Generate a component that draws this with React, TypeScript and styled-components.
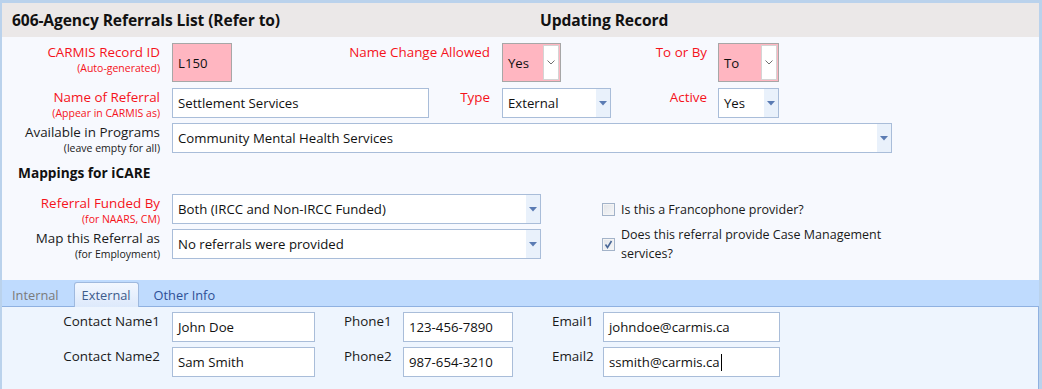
import styled, { createGlobalStyle } from "styled-components";

const GlobalStyle = createGlobalStyle`
	html, body {
		margin: 0;
		padding: 0;
		background: #ffffff;
	}
	body {
		font-family: "Open Sans", "Noto Sans", "Liberation Sans", sans-serif;
		font-size: 12px;
		color: #1a1a1a;
	}
`;

const RED = "#f5131b";

const DropArrow = () => (
	<svg width="8" height="5" viewBox="0 0 8 5">
		<polygon points="0,0 8,0 4,4.5" fill="#5a7bb3" />
	</svg>
);

const Chevron = () => (
	<svg width="8" height="5" viewBox="0 0 8 5">
		<polyline points="0.5,0.5 4,4 7.5,0.5" fill="none" stroke="#707070" strokeWidth="1" />
	</svg>
);

const CheckMark = () => (
	<svg width="9" height="9" viewBox="0 0 9 9">
		<polyline points="1.5,4.5 3.5,7.5 7.5,1" fill="none" stroke="#4a6796" strokeWidth="1.6" />
	</svg>
);

type LabelProps = { main: string; sub?: string; red?: boolean; width: number; gap?: number };

const FieldLabel = ({ main, sub, red, width, gap = 12 }: LabelProps) => (
	<LabelBlock $width={width} $gap={gap}>
		<LabelMain $red={red}>{main}</LabelMain>
		{sub && <LabelSub $red={red}>{sub}</LabelSub>}
	</LabelBlock>
);

type BoxProps = { width: number; height?: number; value: string; caret?: boolean };

const TextBox = ({ width, height = 30, value, caret }: BoxProps) => (
	<InputBox $width={width} $height={height}>
		{value}
		{caret && <Caret />}
	</InputBox>
);

const Dropdown = ({ width, height = 30, value }: BoxProps) => (
	<SelectBox $width={width} $height={height}>
		<SelectValue>{value}</SelectValue>
		<ArrowArea>
			<DropArrow />
		</ArrowArea>
	</SelectBox>
);

const PinkSelect = ({ width, value }: { width: number; value: string }) => (
	<PinkBox $width={width}>
		<SelectValue>{value}</SelectValue>
		<PinkButton>
			<Chevron />
		</PinkButton>
	</PinkBox>
);

const App = () => {
	return (
		<>
			<GlobalStyle />
			<Frame>
				<Header>
					<Title>606-Agency Referrals List (Refer to)</Title>
					<Title>Updating Record</Title>
				</Header>

				<Form>
					<Row $height={39}>
						<FieldLabel main="CARMIS Record ID" sub="(Auto-generated)" red width={158} />
						<PinkInput $width={60}>L150</PinkInput>
						<FieldLabel main="Name Change Allowed" red width={258} />
						<PinkSelect width={59} value="Yes" />
						<FieldLabel main="To or By" red width={146} gap={11} />
						<PinkSelect width={61} value="To" />
					</Row>
					<Row $height={30} $gap={5}>
						<FieldLabel main="Name of Referral" sub="(Appear in CARMIS as)" red width={158} />
						<TextBox width={257} value="Settlement Services" />
						<FieldLabel main="Type" red width={61} />
						<Dropdown width={109} value="External" />
						<FieldLabel main="Active" red width={96} gap={11} />
						<Dropdown width={61} value="Yes" />
					</Row>
					<Row $height={30} $gap={5}>
						<FieldLabel main="Available in Programs" sub="(leave empty for all)" width={158} />
						<Dropdown width={720} value="Community Mental Health Services" />
					</Row>

					<SectionTitle>Mappings for iCARE</SectionTitle>

					<Row $height={30} $gap={5}>
						<FieldLabel main="Referral Funded By" sub="(for NAARS, CM)" red width={158} />
						<Dropdown width={369} value="Both (IRCC and Non-IRCC Funded)" />
						<CheckItem>
							<CheckBox />
							<CheckText>Is this a Francophone provider?</CheckText>
						</CheckItem>
					</Row>
					<Row $height={30} $gap={5}>
						<FieldLabel main="Map this Referral as" sub="(for Employment)" width={158} />
						<Dropdown width={369} value="No referrals were provided" />
						<CheckItem>
							<CheckBox>
								<CheckMark />
							</CheckBox>
							<CheckText>Does this referral provide Case Management services?</CheckText>
						</CheckItem>
					</Row>
				</Form>

				<TabStrip>
					<Tab>Internal</Tab>
					<Tab $active>External</Tab>
					<Tab $link>Other Info</Tab>
				</TabStrip>

				<TabPanel>
					<ContactRow>
						<FieldLabel main="Contact Name1" width={158} />
						<TextBox width={143} value="John Doe" />
						<PlainLabel $width={59} $offset={29}>Phone1</PlainLabel>
						<TextBox width={110} value="123-456-7890" />
						<PlainLabel $width={51} $offset={39}>Email1</PlainLabel>
						<TextBox width={177} value="johndoe@carmis.ca" />
					</ContactRow>
					<ContactRow>
						<FieldLabel main="Contact Name2" width={158} />
						<TextBox width={143} value="Sam Smith" />
						<PlainLabel $width={59} $offset={29}>Phone2</PlainLabel>
						<TextBox width={110} value="987-654-3210" />
						<PlainLabel $width={51} $offset={39}>Email2</PlainLabel>
						<TextBox width={177} value="ssmith@carmis.ca" caret />
					</ContactRow>
				</TabPanel>
			</Frame>
		</>
	);
};

const Frame = styled.div`
	width: 1042px;
	height: 389px;
	box-sizing: border-box;
	border-top: 3px solid #bad2ec;
	border-left: 2px solid #bad2ec;
	border-right: 3px solid #bad2ec;
	background: #f7f9fe;
	display: flex;
	flex-direction: column;
	overflow: hidden;
`;

const Header = styled.div`
	height: 34px;
	flex-shrink: 0;
	background: #ebe8e8;
	display: grid;
	grid-template-columns: 528px 1fr;
	align-items: center;
	padding-left: 10px;
`;

const Title = styled.div`
	font-size: 15.6px;
	font-weight: 700;
	color: #111;
	letter-spacing: -0.1px;
`;

const Form = styled.div`
	display: flex;
	flex-direction: column;
	padding-top: 6px;
`;

const Row = styled.div<{ $height: number; $gap?: number }>`
	display: flex;
	align-items: flex-start;
	height: ${(p) => p.$height}px;
	margin-bottom: ${(p) => p.$gap ?? 6}px;
`;

const LabelBlock = styled.div<{ $width: number; $gap: number }>`
	width: ${(p) => p.$width}px;
	margin-right: ${(p) => p.$gap}px;
	flex-shrink: 0;
	text-align: right;
	padding-top: 1px;
	white-space: nowrap;
`;

const LabelMain = styled.div<{ $red?: boolean }>`
	font-size: 13.4px;
	line-height: 17px;
	color: ${(p) => (p.$red ? RED : "#1a1a1a")};
`;

const LabelSub = styled.div<{ $red?: boolean }>`
	font-size: 10.5px;
	line-height: 15px;
	color: ${(p) => (p.$red ? RED : "#1a1a1a")};
`;

const InputBox = styled.div<{ $width: number; $height: number }>`
	width: ${(p) => p.$width}px;
	height: ${(p) => p.$height}px;
	box-sizing: border-box;
	flex-shrink: 0;
	border: 1px solid #a9bdd9;
	background: #ffffff;
	display: flex;
	align-items: center;
	padding-left: 5px;
	font-size: 13.2px;
	color: #111;
	white-space: nowrap;
	overflow: hidden;
`;

const Caret = styled.span`
	display: inline-block;
	width: 1px;
	height: 17px;
	background: #000;
	margin-left: 1px;
`;

const PinkInput = styled.div<{ $width: number }>`
	width: ${(p) => p.$width}px;
	height: 39px;
	box-sizing: border-box;
	flex-shrink: 0;
	background: #ffb6c1;
	border: 1px solid #a7a7a7;
	display: flex;
	align-items: center;
	padding-left: 5px;
	font-size: 13.2px;
	color: #111;
`;

const SelectBox = styled.div<{ $width: number; $height: number }>`
	width: ${(p) => p.$width}px;
	height: ${(p) => p.$height}px;
	box-sizing: border-box;
	flex-shrink: 0;
	border: 1px solid #a9bdd9;
	background: #ffffff;
	display: flex;
	align-items: stretch;
`;

const SelectValue = styled.div`
	flex: 1;
	display: flex;
	align-items: center;
	padding-left: 5px;
	font-size: 13.2px;
	color: #111;
	white-space: nowrap;
	overflow: hidden;
`;

const ArrowArea = styled.div`
	width: 14px;
	background: #e9f1fb;
	display: flex;
	align-items: center;
	justify-content: center;
`;

const PinkBox = styled.div<{ $width: number }>`
	width: ${(p) => p.$width}px;
	height: 39px;
	box-sizing: border-box;
	flex-shrink: 0;
	background: #ffb6c1;
	border: 1px solid #a7a7a7;
	display: flex;
	align-items: stretch;
	padding: 1px;
	padding-left: 0;
`;

const PinkButton = styled.div`
	width: 16px;
	box-sizing: border-box;
	background: #ffffff;
	border: 1px solid #d4d4d4;
	display: flex;
	align-items: center;
	justify-content: center;
`;

const SectionTitle = styled.div`
	font-size: 13.7px;
	font-weight: 700;
	color: #111;
	padding-left: 16px;
	line-height: 20px;
	margin-top: 5px;
	margin-bottom: 11px;
`;

const CheckItem = styled.div`
	display: flex;
	align-items: center;
	gap: 6px;
	margin-left: 61px;
	height: 100%;
`;

const CheckBox = styled.div`
	width: 13px;
	height: 13px;
	box-sizing: border-box;
	flex-shrink: 0;
	border: 1px solid #a3b3c9;
	background: linear-gradient(135deg, #e2e4e8, #f6f7f9);
	box-shadow: inset 0 0 0 1px #f4f4f4;
	display: flex;
	align-items: center;
	justify-content: center;
`;

const CheckText = styled.div`
	font-size: 12.5px;
	line-height: 19px;
	color: #1a1a1a;
	width: 290px;
`;

const TabStrip = styled.div`
	margin-top: 16px;
	height: 26px;
	flex-shrink: 0;
	box-sizing: border-box;
	background: #bfdbfe;
	display: flex;
	align-items: flex-end;
	gap: 7px;
	padding-left: 2px;
`;

const Tab = styled.div<{ $active?: boolean; $link?: boolean }>`
	height: 25px;
	box-sizing: border-box;
	padding: 0 7px;
	display: flex;
	align-items: center;
	font-size: 12.8px;
	color: ${(p) => (p.$active ? "#3d5b8c" : p.$link ? "#2d4f95" : "#7a7a7a")};
	background: ${(p) => (p.$active ? "linear-gradient(#f2f7ff, #dde9fb)" : "transparent")};
	border: 1px solid ${(p) => (p.$active ? "#9fb9de" : "transparent")};
	border-bottom: none;
	border-radius: 3px 3px 0 0;
	margin-bottom: -1px;
	position: relative;
`;

const TabPanel = styled.div`
	flex: 1;
	background: #eef5fe;
	border-top: 1px solid #8fb1e1;
	border-right: 1px solid #8fb1e1;
	padding-top: 5px;
	display: flex;
	flex-direction: column;
	gap: 6px;
`;

const ContactRow = styled.div`
	display: flex;
	align-items: flex-start;
	height: 29px;
`;

const PlainLabel = styled.div<{ $width: number; $offset: number }>`
	width: ${(p) => p.$width}px;
	margin-left: ${(p) => p.$offset}px;
	flex-shrink: 0;
	font-size: 13.4px;
	line-height: 17px;
	padding-top: 1px;
	color: #1a1a1a;
`;

export default App;
